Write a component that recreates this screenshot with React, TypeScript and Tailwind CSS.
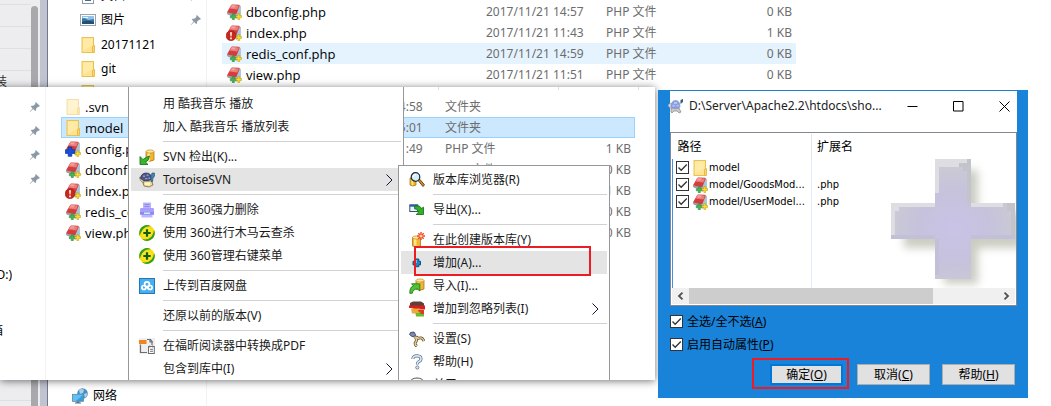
import React from "react";

const uiFont = "font-['Noto_Sans','Noto_Sans_CJK_SC',sans-serif]";

/* ---------- icons ---------- */

function FolderIcon({ faded = false }: { faded?: boolean }) {
  return (
    <svg viewBox="0 0 16 16" className={faded ? "size-4 shrink-0 opacity-50" : "size-4 shrink-0"} aria-hidden="true">
      <rect x="2" y="0.5" width="11.5" height="15" fill="#fee391" stroke="#e9c255" />
      <path d="M3 1.5H12.5V8L3 14z" fill="#ffeaa6" />
      <path d="M12.5 15.5v-6l2-1v7z" fill="#fbd567" stroke="#e3b43c" strokeWidth="0.8" />
    </svg>
  );
}

type Badge = "none" | "error" | "plus";

function PhpIcon({ badge = "none" }: { badge?: Badge }) {
  return (
    <svg viewBox="0 0 16 16" className="size-4 shrink-0" aria-hidden="true">
      <path d="M13 .8 15 2.200 14.800 12 10 15 9 10z" fill="#b9c2cb" />
      <path d="M10.500 9 14.200 3.500 14.600 11 10.500 14.500z" fill="#9fc6de" />
      <path d="M1 8.600 10.200 9.800 9.600 13 2 10.700Q.6 10 1 8.600z" fill="#9aa0a6" />
      <path d="M5.200 1Q5.600.3 6.500.4L12.800.8Q14 1 13.600 2L10.300 10.200.9 8.400z" fill="#d43c3d" />
      <path d="M5.500 1 13 1.500 11.300 5.600 3.400 4.600z" fill="#ea7f7b" />
      <path d="M6 1.300 10 1.500 8.500 3.500 4.800 3.200z" fill="#f2a39d" />
      {badge === "none" && (
        <path d="M6.300 9.800h2v1.900h2v2.100h-2V15.800h-2v-2h-2v-2.100h2z" fill="#46b552" stroke="#227d31" strokeWidth="0.500" />
      )}
      <path d="M11.900 9.600h1.800v2h2v1.800h-2v2.200h-1.800v-2.200h-2v-1.800h2z" fill="#ffe02e" stroke="#b79200" strokeWidth="0.500" />
      {badge === "error" && (
        <>
          <circle cx="5" cy="10.800" r="4.900" fill="#c9281c" stroke="#98150d" strokeWidth="0.600" />
          <path d="M4.100 7.200h1.800l-.4 4.400h-1zM4.200 12.600h1.600v1.600H4.200z" fill="#fff" />
        </>
      )}
      {badge === "plus" && (
        <path d="M3.200 6h3.600v2.800h2.900v3.600H6.800v2.900H3.200v-2.900H.3V8.800h2.900z" fill="#1650d8" stroke="#0a2f9c" strokeWidth="0.700" />
      )}
    </svg>
  );
}

function PinIcon() {
  return (
    <svg viewBox="0 0 12 12" className="size-3 shrink-0" aria-hidden="true">
      <path d="M6.800 1 11 5 9.800 5.800 9 5.700 7 7.800 7.100 9.300 6.200 10 4.200 8 1 11 .8 10.800 3.600 7.400 1.800 5.400 2.600 4.700 4.200 4.800 6.400 2.900 6.200 2z" fill="#8c99a5" />
    </svg>
  );
}

function PictureIcon() {
  return (
    <svg viewBox="0 0 16 12" className="w-4 shrink-0" aria-hidden="true">
      <rect x="0.5" y="0.5" width="15" height="11" fill="#fff" stroke="#9aa3ab" />
      <rect x="2" y="2" width="12" height="8" fill="#8fc3ee" />
      <path d="M2 4.500 5 4l3 2 6-1v5H2z" fill="#3f7599" />
      <path d="M2 8q6-2.500 12 0v2H2z" fill="#234f74" />
      <path d="M3 3.200h5v.9H3z" fill="#fff" />
    </svg>
  );
}

function DocumentIcon() {
  return (
    <svg viewBox="0 0 16 16" className="size-4 shrink-0" aria-hidden="true">
      <rect x="2.500" y="0.500" width="11" height="15" fill="#fff" stroke="#8f979e" />
      <path d="M5 8h3v2H5zM5 12h6v1H5zM9 8h3v1H9z" fill="#3c6e8f" />
    </svg>
  );
}

function NetworkIcon() {
  return (
    <svg viewBox="0 0 16 16" className="size-4 shrink-0" aria-hidden="true">
      <circle cx="10.500" cy="5.500" r="5.300" fill="#4d8fc0" />
      <path d="M7 2q3-2 5 0l-1 3-3 1zM12 6l3-1q.5 3-2 5z" fill="#a9d3ea" />
      <rect x="0.500" y="6.300" width="11" height="7" fill="#2fa0e6" stroke="#6b8799" strokeWidth="0.800" />
      <path d="M1 6.800h10L4 13H1z" fill="#5fc0f5" />
      <path d="M4.500 13.600h3v1h1.500v1H3v-1h1.500z" fill="#60717e" />
    </svg>
  );
}

function Cylinder({ x, y }: { x: number; y: number }) {
  return (
    <g transform={`translate(${x} ${y})`}>
      <path d="M.5 2v8.500q4 2.500 8 0V2z" fill="#f2b632" stroke="#a36a08" strokeWidth="0.700" />
      <path d="M2 3v8q1.500.6 2.500.6V3z" fill="#ffe58a" />
      <ellipse cx="4.500" cy="2" rx="4" ry="1.600" fill="#ffe794" stroke="#b57a10" strokeWidth="0.600" />
    </g>
  );
}

function MenuSvg({ children }: { children: React.ReactNode }) {
  return (
    <svg viewBox="0 0 16 16" className="size-4 shrink-0" aria-hidden="true">
      {children}
    </svg>
  );
}

const checkoutIcon = (
  <MenuSvg>
    <Cylinder x={6.5} y={0.5} />
    <path d="M1 7.500v8h8L6.600 13.200Q10 11.500 10.500 7 7 8 4 10.500z" fill="#38b52c" stroke="#0f6b12" strokeWidth="0.800" />
  </MenuSvg>
);
const tortoiseIcon = (
  <MenuSvg>
    <path d="M3.500 9h9l1.500 4-4 2-5-1z" fill="#eedd9e" stroke="#6a5a2c" strokeWidth="0.700" />
    <path d="M.4 5.500 3 5.200 5 8.500 4.500 11 1.800 8.800z" fill="#f0e2b0" stroke="#6a5a2c" strokeWidth="0.600" />
    <path d="M1.500 6.500Q2 1 7.500 1 12.500 1.200 12.800 7L9 8.800 4.500 8.500z" fill="#4c5688" stroke="#242a50" strokeWidth="0.700" />
    <path d="M4 3.500h2v1.500H4zM7.500 2.500h2V4h-2zM6 6h2.500v1.300H6zM9.500 5.500h1.800V7H9.500z" fill="#8e99c8" />
    <path d="M12 4.500 13 1h2.500v3L14 6.500 13.500 10 12 9z" fill="#3f86ad" stroke="#205068" strokeWidth="0.600" />
    <path d="M6 10.500h5v2.500H6z" fill="#fff3c4" />
  </MenuSvg>
);
const shredIcon = (
  <MenuSvg>
    <path d="M4 .5h8V7H4z" fill="#b9b3fb" />
    <path d="M5.500 2h5v1h-5zM5.500 4h5v1h-5z" fill="#8f86f2" />
    <rect x="1" y="6" width="14" height="7" rx="1.200" fill="#a89ffa" />
    <path d="M1 10h14v2.500H1z" fill="#9186f1" />
    <path d="M5 10.500h6V12H5z" fill="#c6f3ff" />
    <path d="M2.500 13h11v2.500h-11z" fill="#bcb6fc" />
  </MenuSvg>
);
const shieldIcon = (
  <MenuSvg>
    <circle cx="8" cy="8" r="7.800" fill="#f8de0c" />
    <path d="M.2 8A7.800 7.800 0 0 1 12 1.300Q7 .8 3.800 4.500 1.500 7.500.8 11 .2 10 .2 8zM15.800 8A7.800 7.800 0 0 1 3 14Q9 15.500 12.600 11.500 14.800 8.500 15 5 15.800 6.500 15.800 8z" fill="#2f9e22" />
    <circle cx="8" cy="8" r="5" fill="#fbe930" opacity="0.700" />
    <path d="M6.900 4.300h2.200v2.600h2.600v2.200H9.100v2.600H6.900V9.100H4.300V6.900h2.600z" fill="#125f12" />
  </MenuSvg>
);
const cloudIcon = (
  <MenuSvg>
    <rect x="0.500" y="0.500" width="15" height="15" fill="#46aef2" stroke="#2678b5" />
    <g fill="none" stroke="#fff" strokeWidth="1.700">
      <circle cx="8" cy="6.200" r="2.400" />
      <circle cx="4.900" cy="9.500" r="2" />
      <circle cx="11.100" cy="9.500" r="2" />
    </g>
    <path d="M6 8.200 10.200 11.200" stroke="#fff" strokeWidth="1.500" />
  </MenuSvg>
);
const pdfIcon = (
  <MenuSvg>
    <rect width="16" height="16" fill="#efefef" />
    <path d="M1.500 6.500v8H8M8 1.500h3.500l1.500 2V7M11 1v3h3" fill="none" stroke="#6e6e6e" strokeWidth="1.200" />
    <path d="M0 2h7.500v4H0z" fill="#f58220" />
    <rect x="9.500" y="8.500" width="5.800" height="7" fill="#fff" stroke="#6e6e6e" />
    <path d="M10.800 7.500v2M13.800 7.500v2M11 11.300h3M11 13.300h3" stroke="#6e6e6e" />
  </MenuSvg>
);
const browseIcon = (
  <MenuSvg>
    <path d="M1 6v7q3 2 6 0V6z" fill="#f0b429" stroke="#9c6a0c" strokeWidth="0.700" />
    <path d="M2.500 8v5q1 .4 1.800.4V8z" fill="#ffe384" />
    <path d="M9 8.500 10.800 7.300 15.500 12.800 14 14.500z" fill="#d18a20" stroke="#4c2c04" strokeWidth="0.800" />
    <circle cx="6.500" cy="5" r="4.300" fill="#d5ecfa" stroke="#1f2a38" strokeWidth="1.200" />
    <path d="M4.200 5Q4.500 2.600 7 2.500" fill="none" stroke="#fff" strokeWidth="1.200" />
  </MenuSvg>
);
const exportIcon = (
  <MenuSvg>
    <rect x="0.800" y="3" width="8" height="6.500" fill="#e9f1fb" stroke="#37506e" />
    <path d="M.8 2.500h8v2.200h-8z" fill="#2c5ea8" />
    <path d="M5.500 4.500Q11 2.500 12.300 6.500L14.500 5.200V12.500H7.200l2.200-2Q9.500 7.200 5.500 6.800z" fill="#33b02a" stroke="#0e6912" strokeWidth="0.800" />
  </MenuSvg>
);
const createRepoIcon = (
  <MenuSvg>
    <Cylinder x={3} y={3.5} />
    <path d="M12 0v8M8 4h8M9.300 1.300l5.400 5.400M14.700 1.300 9.300 6.700" stroke="#f0452a" strokeWidth="1.400" />
    <circle cx="12" cy="4" r="1.600" fill="#ffd9a0" />
  </MenuSvg>
);
const addIcon = (
  <MenuSvg>
    <path d="M5.800 4h4v2.300h1.700v3.600H9.800V11.700h-4V9.900H4V6.300h1.800z" fill="#1f86c4" stroke="#0d517f" />
    <path d="M6.500 5h1.500v3H5V7h1.500z" fill="#6bc2ee" />
  </MenuSvg>
);
const importIcon = (
  <MenuSvg>
    <Cylinder x={6.5} y={0.5} />
    <path d="M.8 15.300Q.5 9 4.500 7.800L2.500 5.800h8.300V13L8.500 11Q4 11 3.200 15.300z" fill="#52c234" stroke="#136e15" strokeWidth="0.800" />
  </MenuSvg>
);
const ignoreIcon = (
  <MenuSvg>
    <path d="M1 2 4 .5h8l3 2v3H1z" fill="#5c4238" />
    <path d="M0 4.500h16v4H6L3 7H0z" fill="#d61f1f" />
    <path d="M2 7.500h9l1 3-4 2H3z" fill="#f0a73c" />
    <path d="M9 9h6v4l-4 1z" fill="#e03a1e" />
    <path d="M6.500 12h3l2-2v3h3.500v2.500H7z" fill="#6cba2d" />
  </MenuSvg>
);
const settingsIcon = (
  <MenuSvg>
    <path d="M1.500 1.500 5 1 6.500 3.500 6 6 3 5.500 .5 3.500z" fill="#7b8ab5" stroke="#2c3453" strokeWidth="0.800" />
    <path d="M5.500 6Q8.500 6 9 7.500 13.500 5.500 14.800 10M6.500 6.500Q8.500 9.500 6.300 11.500 5.500 14 8 15.200" fill="none" stroke="#5e4b2b" strokeWidth="2.800" />
    <path d="M5.500 6Q8.500 6 9 7.500 13.500 5.500 14.800 10M6.500 6.500Q8.500 9.500 6.300 11.500 5.500 14 8 15.200" fill="none" stroke="#e6cf9c" strokeWidth="1.400" />
  </MenuSvg>
);
const helpIcon = (
  <MenuSvg>
    <path d="M3.800 5Q4 1.700 8 1.700 12 1.900 12 4.800 12 7 9.500 7.800 8.300 8.400 8.300 10.500" fill="none" stroke="#54708c" strokeWidth="3" />
    <path d="M3.800 5Q4 1.700 8 1.700 12 1.900 12 4.800 12 7 9.500 7.800 8.300 8.400 8.300 10.500" fill="none" stroke="#dce9f5" strokeWidth="1.600" />
    <circle cx="8.300" cy="13.500" r="1.600" fill="#dce9f5" stroke="#54708c" strokeWidth="0.800" />
  </MenuSvg>
);
const aboutIcon = (
  <MenuSvg>
    <path d="M.5 6Q2 1 8 1t7.500 5v6H.5z" fill="#fff" stroke="#555" />
  </MenuSvg>
);

/* ---------- file lists ---------- */

type FileRow = {
  name: string;
  date: string;
  type: string;
  size?: string;
  icon: React.ReactNode;
  state?: "hover" | "selected";
};

function FileTable({ rows, label }: { rows: FileRow[]; label: string }) {
  return (
    <table aria-label={label} className="w-[574px] table-fixed border-collapse text-xs leading-4">
      <colgroup>
        <col className="w-[264px]" />
        <col className="w-[120px]" />
        <col className="w-[90px]" />
        <col />
      </colgroup>
      <tbody>
        {rows.map((r) => (
          <tr
            key={r.name}
            className={
              r.state === "selected"
                ? "h-[21px] bg-[#cce8ff] outline outline-1 -outline-offset-1 outline-[#99d1ff]"
                : r.state === "hover"
                  ? "h-[21px] bg-[#e5f3ff]"
                  : "h-[21px]"
            }
          >
            <td className="p-0 pl-1">
              <div className="flex items-center gap-1 font-['Open_Sans','Noto_Sans',sans-serif] text-[13px] leading-4 text-black">
                {r.icon}
                <span>{r.name}</span>
              </div>
            </td>
            <td className="p-0 whitespace-nowrap text-[#6d6d6d]">{r.date}</td>
            <td className="p-0 whitespace-nowrap text-[#6d6d6d]">{r.type}</td>
            <td className="p-0 pr-1 text-right text-[#6d6d6d]">{r.size}</td>
          </tr>
        ))}
      </tbody>
    </table>
  );
}

const backRows: FileRow[] = [
  { name: "dbconfig.php", date: "2017/11/21 14:57", type: "PHP 文件", size: "0 KB", icon: <PhpIcon /> },
  { name: "index.php", date: "2017/11/21 11:43", type: "PHP 文件", size: "1 KB", icon: <PhpIcon badge="error" /> },
  { name: "redis_conf.php", date: "2017/11/21 14:59", type: "PHP 文件", size: "0 KB", icon: <PhpIcon />, state: "hover" },
  { name: "view.php", date: "2017/11/21 11:51", type: "PHP 文件", size: "0 KB", icon: <PhpIcon /> },
];

const frontRows: FileRow[] = [
  { name: ".svn", date: "2017/11/21 14:58", type: "文件夹", icon: <FolderIcon faded /> },
  { name: "model", date: "2017/11/21 15:01", type: "文件夹", icon: <FolderIcon />, state: "selected" },
  { name: "config.php", date: "2017/11/21 11:49", type: "PHP 文件", size: "1 KB", icon: <PhpIcon badge="plus" /> },
  { name: "dbconfig.php", date: "2017/11/21 14:57", type: "PHP 文件", size: "0 KB", icon: <PhpIcon /> },
  { name: "index.php", date: "2017/11/21 11:43", type: "PHP 文件", size: "1 KB", icon: <PhpIcon badge="error" /> },
  { name: "redis_conf.php", date: "2017/11/21 14:59", type: "PHP 文件", size: "0 KB", icon: <PhpIcon /> },
  { name: "view.php", date: "2017/11/21 11:51", type: "PHP 文件", size: "0 KB", icon: <PhpIcon /> },
];

function NavRow({ icon, text, pinned }: { icon: React.ReactNode; text: string; pinned?: boolean }) {
  return (
    <div className="flex h-6 items-center pr-1 pl-8">
      {icon}
      <span className="ml-[5px] flex-1 whitespace-nowrap">{text}</span>
      {pinned && <PinIcon />}
    </div>
  );
}

function BackExplorer() {
  return (
    <div className="flex h-screen overflow-hidden bg-white">
      <div className="w-[31px] shrink-0 bg-[#ededf0] text-xs">
        <div className="h-[5px] border-b border-[#dfdfe3]" />
        {Array.from({ length: 18 }, (_, i) => (
          <div key={i} className="flex h-[22px] items-center border-b border-[#dfdfe3]">
            {i === 3 && <span className="flex w-[7px] justify-end overflow-hidden text-[#333]">装</span>}
          </div>
        ))}
      </div>
      <div className="flex w-[9px] shrink-0 bg-[#ededf0] pt-[6px] pr-[2px]">
        <div className="flex-1 rounded-t-full bg-[#a9a9ad]" />
      </div>
      <div className="w-2 shrink-0 border-r border-[#74768a] bg-[#c0c3d0]" />
      <nav className="flex w-[159px] shrink-0 flex-col border-r border-[#f3f3f3] text-xs text-black">
        <div className="-mt-4">
          <NavRow icon={<DocumentIcon />} text="文档" pinned />
          <NavRow icon={<PictureIcon />} text="图片" pinned />
          <div className="pt-px">
            <NavRow icon={<FolderIcon />} text="20171121" />
            <NavRow icon={<FolderIcon />} text="git" />
            <NavRow icon={<FolderIcon />} text="" />
          </div>
        </div>
        <div className="mt-auto flex h-5 items-center gap-[5px] pl-6">
          <NetworkIcon />
          <span>网络</span>
        </div>
      </nav>
      <main className="pt-px pl-[15px]">
        <FileTable rows={backRows} label="files" />
      </main>
    </div>
  );
}

/* ---------- menus ---------- */

function Chevron() {
  return (
    <svg viewBox="0 0 7 12" className="h-3 w-[7px] shrink-0" aria-hidden="true">
      <path d="M.5.500 6 6 .5 11.500" fill="none" stroke="#1d1030" strokeWidth="1" />
    </svg>
  );
}

function MenuItem({
  icon,
  text,
  active,
  more,
  children,
}: {
  icon?: React.ReactNode;
  text: string;
  active?: boolean;
  more?: boolean;
  children?: React.ReactNode;
}) {
  return (
    <li className="relative">
      <button
        type="button"
        className={
          active
            ? "flex h-[23px] w-full items-center bg-[#e4e4e4] pr-2 pl-2 text-left whitespace-nowrap"
            : "flex h-[23px] w-full items-center pr-2 pl-2 text-left whitespace-nowrap"
        }
      >
        <span className="mr-2 size-4 shrink-0">{icon}</span>
        <span className="flex-1">{text}</span>
        {more && <Chevron />}
      </button>
      {children}
    </li>
  );
}

function Separator() {
  return (
    <li role="separator" className="ml-8 flex h-[7px] items-center">
      <div className="h-px flex-1 bg-[#d2d2d2]" />
    </li>
  );
}

function ContextMenu() {
  return (
    <ul className="absolute top-0 bottom-0 left-[128px] w-[276px] overflow-hidden border-x border-[#979797] bg-white px-[2px] pt-[5px] text-xs text-[#1a1a1a]">
      <MenuItem text="用 酷我音乐 播放" />
      <MenuItem text="加入 酷我音乐 播放列表" />
      <Separator />
      <MenuItem icon={checkoutIcon} text="SVN 检出(K)..." />
      <MenuItem icon={tortoiseIcon} text="TortoiseSVN" active more />
      <Separator />
      <MenuItem icon={shredIcon} text="使用 360强力删除" />
      <MenuItem icon={shieldIcon} text="使用 360进行木马云查杀" />
      <MenuItem icon={shieldIcon} text="使用 360管理右键菜单" />
      <Separator />
      <MenuItem icon={cloudIcon} text="上传到百度网盘" />
      <Separator />
      <MenuItem text="还原以前的版本(V)" />
      <Separator />
      <MenuItem icon={pdfIcon} text="在福昕阅读器中转换成PDF" />
      <MenuItem text="包含到库中(I)" more />
    </ul>
  );
}

function SubMenu() {
  return (
    <ul className="absolute top-[78px] bottom-0 left-[398px] w-[212px] overflow-hidden border-x border-t border-[#979797] bg-white px-[2px] pt-[2px] text-xs text-[#1a1a1a]">
      <MenuItem icon={browseIcon} text="版本库浏览器(R)" />
      <Separator />
      <MenuItem icon={exportIcon} text="导出(X)..." />
      <Separator />
      <MenuItem icon={createRepoIcon} text="在此创建版本库(Y)" />
      <MenuItem icon={addIcon} text="增加(A)..." active>
        <div className="pointer-events-none absolute -top-[5px] right-4 left-[13px] z-10 h-[30px] border-2 border-[#ed1c24]" />
      </MenuItem>
      <MenuItem icon={importIcon} text="导入(I)..." />
      <MenuItem icon={ignoreIcon} text="增加到忽略列表(I)" more />
      <Separator />
      <MenuItem icon={settingsIcon} text="设置(S)" />
      <MenuItem icon={helpIcon} text="帮助(H)" />
      <MenuItem icon={aboutIcon} text="关于(A)" />
    </ul>
  );
}

function FrontExplorer() {
  return (
    <section className="absolute top-[87px] left-0 flex h-[293px] w-[655px] bg-white shadow-[0_1px_8px_rgba(0,0,0,0.55)]">
      <nav className="w-[46px] shrink-0 border-r border-[#f3f3f3] pt-2 text-xs text-black">
        {[0, 1, 2, 3].map((i) => (
          <div key={i} className="flex h-6 items-center justify-end pr-1">
            <PinIcon />
          </div>
        ))}
        <div className="mt-[72px] flex h-6 w-3 items-center justify-end overflow-hidden">(D:)</div>
        <div className="mt-8 flex h-6 w-[3px] items-center justify-end overflow-hidden">箱</div>
      </nav>
      <div className="pl-[15px]">
        <div className="flex h-[9px] items-start">
          <div className="ml-[377px] h-[3px] w-[121px] border-x border-[#dedede]" />
          <div className="h-[3px] w-20 border-r border-[#dedede]" />
        </div>
        <FileTable rows={frontRows} label="model files" />
      </div>
      <ContextMenu />
      <SubMenu />
    </section>
  );
}

/* ---------- dialog ---------- */

function CheckBox({ id }: { id: string }) {
  return (
    <span className="grid size-[13px] shrink-0 *:col-start-1 *:row-start-1">
      <input id={id} type="checkbox" defaultChecked className="peer size-[13px] appearance-none border border-[#333] bg-white" />
      <svg viewBox="0 0 13 13" className="pointer-events-none invisible size-[13px] peer-checked:visible" aria-hidden="true">
        <path d="M2.500 6.500 5.200 9.300 10.800 3.500" fill="none" stroke="#333" strokeWidth="1.300" />
      </svg>
    </span>
  );
}

function PlusArt() {
  return (
    <svg viewBox="0 0 128 132" className="absolute right-0 bottom-[17px] h-[132px] w-[128px]" aria-hidden="true">
      <defs>
        <radialGradient id="glow" gradientUnits="userSpaceOnUse" cx="66" cy="72" r="66">
          <stop offset="0" stopColor="#c9c3e6" />
          <stop offset="0.55" stopColor="#c6c2dc" />
          <stop offset="1" stopColor="#cbcbd3" />
        </radialGradient>
        <filter id="soft" x="-20%" y="-20%" width="140%" height="140%">
          <feGaussianBlur stdDeviation="4" />
        </filter>
      </defs>
      <path d="M56 14H90V56H134V92H90V128H56V92H16V56H56z" fill="#b9bcae" opacity="0.75" filter="url(#soft)" />
      <path d="M47 3H83V47H127V83H83V123H47V83H3V47H47z" fill="url(#glow)" />
      <path d="M47 3H79V7H71V11H51V37H47zM3 47H47V51H11V55H7V83H3zM83 47H115V51H83z" fill="#dedee2" />
      <path d="M79 3h4v44h-4zM71 7h8v8h-4v-4h-4zM119 47h8v36h-4V55h-4z" fill="#c3c3cc" />
      <path d="M47 83h4v36h-4zM3 79h44v4H3zM83 79h44v4H83z" fill="#c2bfd8" />
    </svg>
  );
}

const dialogRows = [
  { id: "r0", name: "model", ext: "", icon: <FolderIcon /> },
  { id: "r1", name: "model/GoodsMod...", ext: ".php", icon: <PhpIcon /> },
  { id: "r2", name: "model/UserModel...", ext: ".php", icon: <PhpIcon /> },
];

const pushButton = "h-[21px] w-[73px] bg-[#e1e1e1] text-xs leading-4 text-black";

function AddDialog() {
  return (
    <section
      role="dialog"
      aria-label="TortoiseSVN"
      className="absolute top-[90px] left-[658px] h-[308px] w-[370px] bg-[#1983d9] pt-px pr-[11px] pl-3 text-xs text-black"
    >
      <header className="flex h-[41px] items-start bg-white pt-[5px]">
        <div className="flex h-5 flex-1 items-center gap-[5px]">
          <svg viewBox="0 0 16 16" className="-ml-[2px] size-4 shrink-0" aria-hidden="true">
            <path d="M3 10h8l2 4-2 1-2-2H6l-2 2-1-1z" fill="#c8c8c8" stroke="#777" strokeWidth="0.600" />
            <circle cx="2.300" cy="7.500" r="2" fill="#d9dbe2" stroke="#8b8f9c" strokeWidth="0.600" />
            <path d="M3 9Q3 2.500 7.500 2.500T12 9q-4 3-9 0z" fill="#8c9fe0" stroke="#8090cc" strokeWidth="0.700" />
            <path d="M6 4h3v2H6zM4.500 7h2.200v1.500H4.500zM8.500 7h2.200v1.500H8.500z" fill="#b6c3f3" />
            <path d="M12.500 2 15 1v3l-2.500 2z" fill="#2f6378" />
          </svg>
          <h1 className="whitespace-nowrap text-[#222]">D:\Server\Apache2.2\htdocs\sho...</h1>
        </div>
        <div className="flex gap-5">
          <button type="button" aria-label="Minimize" className="flex h-5 w-[26px] items-center justify-center">
            <svg viewBox="0 0 11 11" className="size-[11px]"><path d="M.5 5.500h10" stroke="#000" /></svg>
          </button>
          <button type="button" aria-label="Maximize" className="flex h-5 w-[26px] items-center justify-center">
            <svg viewBox="0 0 11 11" className="size-[11px]"><path d="M.5.500h9.500v9.500H.5z" fill="none" stroke="#000" /></svg>
          </button>
          <button type="button" aria-label="Close" className="flex h-5 w-[26px] items-center justify-center">
            <svg viewBox="0 0 11 11" className="size-[11px]"><path d="M.5.500l10 10M10.500.500l-10 10" stroke="#000" /></svg>
          </button>
        </div>
      </header>

      <div className="relative flex h-[174px] flex-col border border-[#828790] bg-white p-px">
        <PlusArt />
        <table aria-label="paths" className="relative w-full table-fixed border-collapse text-left">
          <colgroup>
            <col className="w-[139px]" />
            <col />
          </colgroup>
          <thead>
            <tr className="h-[25px]">
              <th className="border-r border-[#e5e5e5] p-0 pl-[5px] font-normal">路径</th>
              <th className="p-0 pl-[5px] font-normal">扩展名</th>
            </tr>
          </thead>
          <tbody className="font-['DejaVu_Sans_Condensed','DejaVu_Sans',sans-serif] text-[11px] leading-4">
            {dialogRows.map((r) => (
              <tr key={r.id} className="h-[17px]">
                <td className="border-r border-l border-r-[#e3edfb] border-l-[#4a90e2] p-0 pl-[3px]">
                  <div className="flex h-[17px] items-center">
                    <CheckBox id={r.id} />
                    <label htmlFor={r.id} className="ml-[3px] flex items-center gap-px whitespace-nowrap">
                      {r.icon}
                      {r.name}
                    </label>
                  </div>
                </td>
                <td className="p-0 pl-[5px]">{r.ext}</td>
              </tr>
            ))}
            <tr className="h-[78px]">
              <td className="border-r border-l border-r-[#e3edfb] border-l-[#4a90e2] p-0" />
              <td className="p-0" />
            </tr>
          </tbody>
        </table>
        <div className="relative mt-auto flex h-4 shrink-0 items-center bg-[#f0f0f0]">
          <button type="button" aria-label="Scroll left" className="flex h-4 w-[17px] items-center justify-center">
            <svg viewBox="0 0 7 8" className="h-2 w-[7px]"><path d="M5.500.700 2 4l3.500 3.300" fill="none" stroke="#505050" strokeWidth="1.800" /></svg>
          </button>
          <div className="h-full w-[244px] bg-[#cdcdcd]" />
          <button type="button" aria-label="Scroll right" className="ml-auto flex h-4 w-[17px] items-center justify-center">
            <svg viewBox="0 0 7 8" className="h-2 w-[7px]"><path d="M1.500.700 5 4 1.500 7.300" fill="none" stroke="#505050" strokeWidth="1.800" /></svg>
          </button>
        </div>
      </div>

      <div className="mt-1">
        <label htmlFor="all" className="flex h-[23px] items-center gap-1">
          <CheckBox id="all" />
          <span>全选/全不选(<u>A</u>)</span>
        </label>
        <label htmlFor="props" className="flex h-[23px] items-center gap-1">
          <CheckBox id="props" />
          <span>启用自动属性(<u>P</u>)</span>
        </label>
      </div>

      <div className="mt-2 flex justify-end pr-[2px]">
        <div className="relative mr-[14px]">
          <button type="button" className={`${pushButton} flex items-center justify-center border-2 border-[#0078d7]`}>
            <span>确定(<u>O</u>)</span>
          </button>
          <div className="pointer-events-none absolute -top-[6px] -right-[6px] -bottom-1 -left-[18px] border-2 border-[#ed1c24]" />
        </div>
        <button type="button" className={`${pushButton} mr-3 flex items-center justify-center border border-[#adadad]`}>
          <span>取消(<u>C</u>)</span>
        </button>
        <button type="button" className={`${pushButton} flex items-center justify-center border border-[#adadad]`}>
          <span>帮助(<u>H</u>)</span>
        </button>
      </div>
    </section>
  );
}

export default function App() {
  return (
    <div className={`relative min-h-screen overflow-hidden bg-white ${uiFont}`}>
      <BackExplorer />
      <FrontExplorer />
      <AddDialog />
    </div>
  );
}
